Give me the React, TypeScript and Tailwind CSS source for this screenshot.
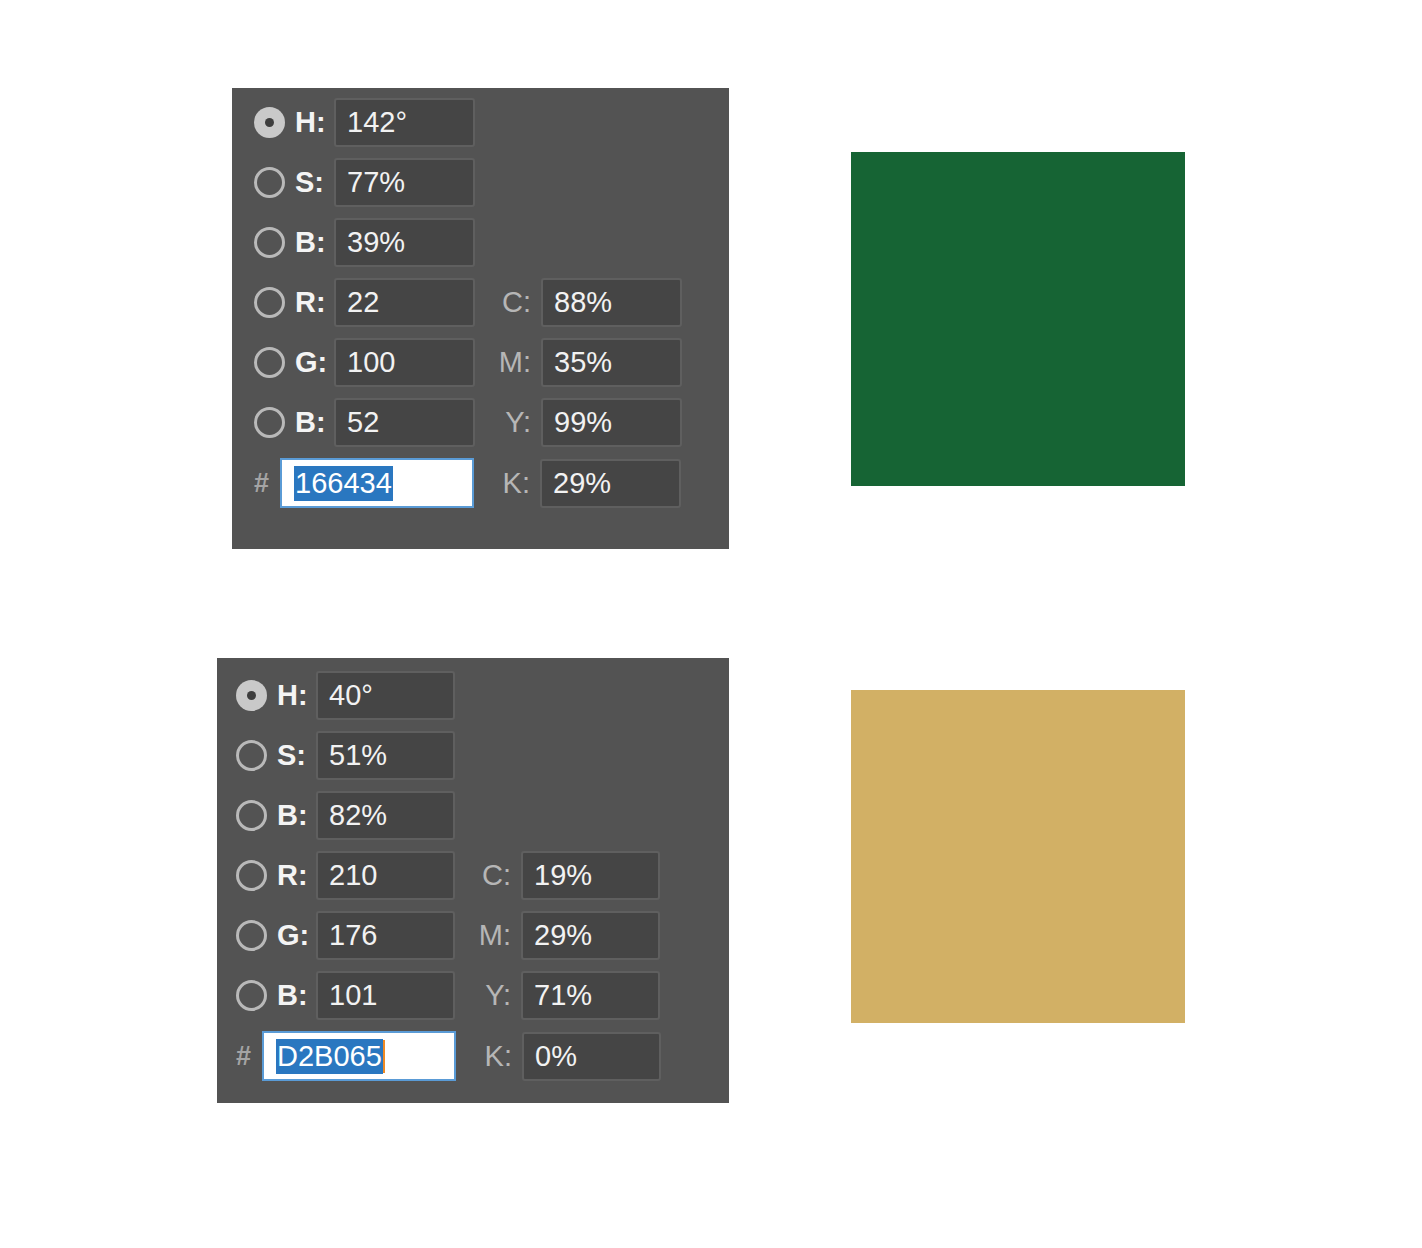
import React from 'react';

type Row = { label: string; value: string; right?: { label: string; value: string } };

const FONT = "font-['Liberation_Sans',Arial,sans-serif]";

function Radio({ checked }: { checked?: boolean }) {
  if (checked) {
    return (
      <div className="flex h-[31px] w-[31px] shrink-0 items-center justify-center rounded-full bg-[#c9c9c9]">
        <div className="h-[9px] w-[9px] rounded-full bg-[#3e3e3e]" />
      </div>
    );
  }
  return <div className="h-[31px] w-[31px] shrink-0 rounded-full border-[3px] border-[#b9b9b9]" />;
}

function Field({ value, w }: { value: string; w: string }) {
  return (
    <div
      className={`flex h-[49px] ${w} shrink-0 items-center rounded-[3px] border-2 border-[#5f5f5f] bg-[#454545] pl-[11px] text-[29px] leading-none text-[#f2f2f2]`}
    >
      {value}
    </div>
  );
}

function Rows({ rows, inputW }: { rows: Row[]; inputW: string }) {
  return (
    <>
      {rows.map((r, i) => (
        <div key={i} className="flex h-[49px] items-center">
          <Radio checked={i === 0} />
          <div className="ml-[10px] w-[39px] text-[29px] font-bold leading-none text-[#f4f4f4]">{r.label}</div>
          <Field value={r.value} w={inputW} />
          {r.right && (
            <>
              <div className="w-[66px] pr-[10px] text-right text-[29px] leading-none text-[#b6b6b6]">{r.right.label}</div>
              <Field value={r.right.value} w={inputW} />
            </>
          )}
        </div>
      ))}
    </>
  );
}

function HexRow({ hex, k, caret, inputW }: { hex: string; k: string; caret?: boolean; inputW: string }) {
  return (
    <div className="flex h-[50px] items-center">
      <div className="w-[26px] text-[27px] font-bold leading-none text-[#a4a4a4]">#</div>
      <div className="flex h-[50px] w-[194px] shrink-0 items-center border-2 border-[#5a9bd6] bg-white pl-[12px]">
        <span className="bg-[#2a77c0] px-[1px] py-[3px] text-[29px] leading-none text-white">{hex}</span>
        {caret && <span className="h-[33px] w-[2px] bg-[#f08a24]" />}
      </div>
      <div className="w-[66px] pr-[10px] text-right text-[29px] leading-none text-[#b6b6b6]">K:</div>
      <Field value={k} w={inputW} />
    </div>
  );
}

export default function App() {
  const green: Row[] = [
    { label: 'H:', value: '142°' },
    { label: 'S:', value: '77%' },
    { label: 'B:', value: '39%' },
    { label: 'R:', value: '22', right: { label: 'C:', value: '88%' } },
    { label: 'G:', value: '100', right: { label: 'M:', value: '35%' } },
    { label: 'B:', value: '52', right: { label: 'Y:', value: '99%' } },
  ];
  const gold: Row[] = [
    { label: 'H:', value: '40°' },
    { label: 'S:', value: '51%' },
    { label: 'B:', value: '82%' },
    { label: 'R:', value: '210', right: { label: 'C:', value: '19%' } },
    { label: 'G:', value: '176', right: { label: 'M:', value: '29%' } },
    { label: 'B:', value: '101', right: { label: 'Y:', value: '71%' } },
  ];

  return (
    <div className={`min-h-[1248px] w-[1422px] bg-white pt-[88px] ${FONT}`}>
      {/* green picker */}
      <div className="flex items-start">
        <div className="ml-[232px] flex h-[461px] w-[497px] shrink-0 flex-col gap-[11px] bg-[#535353] pl-[22px] pt-[10px]">
          <Rows rows={green} inputW="w-[141px]" />
          <HexRow hex="166434" k="29%" inputW="w-[141px]" />
        </div>
        <div className="ml-[122px] mt-[64px] h-[334px] w-[334px] bg-[#166434]" />
      </div>

      {/* gold picker */}
      <div className="mt-[109px] flex items-start">
        <div className="ml-[217px] flex h-[445px] w-[512px] shrink-0 flex-col gap-[11px] bg-[#535353] pl-[19px] pt-[13px]">
          <Rows rows={gold} inputW="w-[139px]" />
          <HexRow hex="D2B065" k="0%" caret inputW="w-[139px]" />
        </div>
        <div className="ml-[122px] mt-[32px] h-[333px] w-[334px] bg-[#d2b065]" />
      </div>
    </div>
  );
}
